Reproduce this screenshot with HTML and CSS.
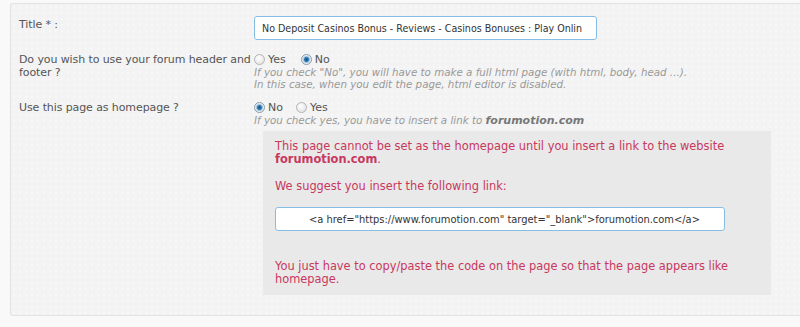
FILE: index.html
```html
<!DOCTYPE html>
<html lang="en">
<head>
    <meta charset="UTF-8">
    <title>Page settings</title>
    <link rel="stylesheet" href="styles.css">
</head>
<body>

<div class="panel">
    <div class="row row-title">
        <div class="label">Title * :</div>
        <div class="field">
            <input type="text" class="text-input title-input" value="No Deposit Casinos Bonus - Reviews - Casinos Bonuses : Play Onlin">
        </div>
    </div>

    <div class="row row-header">
        <div class="label">Do you wish to use your forum header and footer ?</div>
        <div class="field">
            <div class="choices">
                <label class="choice"><input type="radio" name="header"> Yes</label>
                <label class="choice"><input type="radio" name="header" checked> No</label>
            </div>
            <div class="hint">If you check "No", you will have to make a full html page (with html, body, head ...).<br>In this case, when you edit the page, html editor is disabled.</div>
        </div>
    </div>

    <div class="row row-home">
        <div class="label">Use this page as homepage ?</div>
        <div class="field">
            <div class="choices">
                <label class="choice"><input type="radio" name="home" checked> No</label>
                <label class="choice"><input type="radio" name="home"> Yes</label>
            </div>
            <div class="hint">If you check yes, you have to insert a link to <b>forumotion.com</b></div>
        </div>
    </div>

    <div class="warning">
        <p>This page cannot be set as the homepage until you insert a link to the website <b>forumotion.com</b>.</p>
        <p>We suggest you insert the following link:</p>
        <input type="text" class="text-input code-input" value='<a href="https://www.forumotion.com" target="_blank">forumotion.com</a>'>
        <p class="last">You just have to copy/paste the code on the page so that the page appears like homepage.</p>
    </div>
</div>

</body>
</html>
```

FILE: styles.css
```css
body {
    margin: 0;
    background-color: #f9f9f9;
    font-family: "DejaVu Sans", Verdana, sans-serif;
    font-size: 11px;
    color: #555;
}
.panel {
    margin: 3px 0 0 10px;
    height: 313px;
    box-sizing: border-box;
    padding: 11px 0 0 8px;
    border: 1px solid #e2e2e2;
    border-right: none;
    border-radius: 3px 0 0 3px;
    background-color: #f3f3f3;
    background-image: radial-gradient(#fbfbfb 0.6px, transparent 0.8px);
    background-size: 6px 6px;
}
.row {
    display: flex;
    line-height: 13px;
}
.label {
    width: 242px;
    margin-right: -7px;
    flex: none;
    letter-spacing: -0.1px;
}
.row-title {
    height: 26px;
}
.row-title .label {
    padding-top: 3px;
}
.row-header {
    margin-top: 12px;
}
.row-home {
    margin-top: 11px;
}
.choices {
    display: flex;
    gap: 15px;
}
.row-home .choices {
    gap: 13px;
}
.choice {
    display: flex;
    align-items: center;
}
.choice input {
    -webkit-appearance: none;
    appearance: none;
    width: 11px;
    height: 11px;
    margin: 0 3px 0 0;
    border: 1px solid #b4b4b4;
    border-radius: 50%;
    background: radial-gradient(circle at 40% 35%, #ffffff, #dcdcdc);
    box-sizing: border-box;
}
.choice input:checked {
    border-color: #8a9aa8;
    background: radial-gradient(circle at 50% 50%, #1d4f7a 0, #2f78b0 2px, #9cc4e2 3px, #e6eef4 4px);
}
.hint {
    font-style: italic;
    font-size: 10.3px;
    line-height: 12px;
    color: #999;
}
.hint b {
    font-size: 11px;
    color: #777;
}
.text-input {
    box-sizing: border-box;
    height: 24px;
    padding: 0 7px;
    border: 1px solid #86bde3;
    border-radius: 3px;
    background: #fff;
    font-family: "DejaVu Sans Condensed", Tahoma, sans-serif;
    font-size: 10.6px;
    line-height: 22px;
    color: #333;
}
.title-input {
    width: 343px;
    margin-top: 1px;
}
.warning {
    margin: 4px 29px 0 244px;
    height: 164px;
    box-sizing: border-box;
    padding: 9px 12px 0;
    background-color: #e9e9e9;
    color: #c8385e;
    font-size: 11.4px;
    line-height: 13px;
}
.warning p {
    margin: 0 0 14px;
}
.code-input {
    width: 450px;
    padding-left: 33px;
    display: block;
    font-size: 11px;
}
.warning p.last {
    margin-top: 29px;
}
```
